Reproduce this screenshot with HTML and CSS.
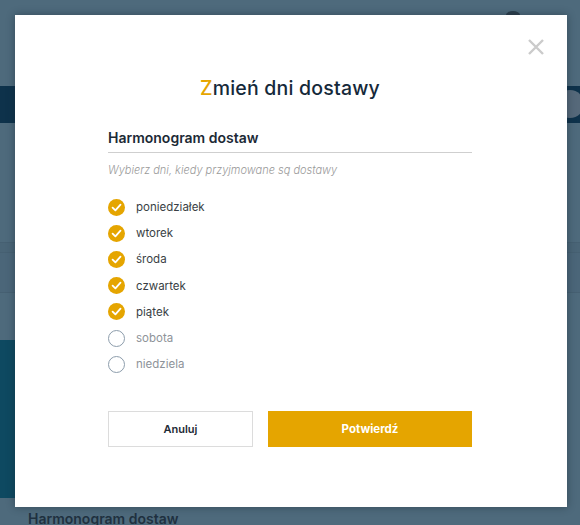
FILE: index.html
```html
<!DOCTYPE html>
<html lang="pl">
<head>
<meta charset="utf-8">
<title>Zmień dni dostawy</title>
<link rel="stylesheet" href="styles.css">
</head>
<body>
<div class="page">
  <div class="bg-header"><span class="bg-avatar"></span></div>
  <div class="bg-nav"><span class="bg-circle"></span></div>
  <div class="bg-content">
    <div class="bg-row r1"></div>
    <div class="bg-row r2"></div>
    <div class="bg-row r3"></div>
    <div class="bg-row r4"></div>
    <div class="bg-side"></div>
    <div class="bg-foot">
      <div class="bg-text">Harmonogram dostaw</div>
    </div>
  </div>

  <div class="modal" role="dialog">
    <button class="close" aria-label="Zamknij">
      <svg width="18" height="18" viewBox="0 0 18 18"><path d="M2 2 L16 16 M16 2 L2 16" stroke="#cbcbcb" stroke-width="2.4" fill="none"/></svg>
    </button>
    <div class="content">
      <h1 class="title"><span class="accent">Z</span>mień dni dostawy</h1>
      <h2 class="section">Harmonogram dostaw</h2>
      <p class="hint">Wybierz dni, kiedy przyjmowane są dostawy</p>
      <ul class="days">
        <li class="day checked"><span class="box"><svg width="17" height="17" viewBox="0 0 17 17"><circle cx="8.5" cy="8.5" r="8.5" fill="#e5a500"/><path d="M4.6 8.6 L7.4 11.4 L12.5 5.7" stroke="#fff" stroke-width="1.8" fill="none" stroke-linecap="round" stroke-linejoin="round"/></svg></span>poniedziałek</li>
        <li class="day checked"><span class="box"><svg width="17" height="17" viewBox="0 0 17 17"><circle cx="8.5" cy="8.5" r="8.5" fill="#e5a500"/><path d="M4.6 8.6 L7.4 11.4 L12.5 5.7" stroke="#fff" stroke-width="1.8" fill="none" stroke-linecap="round" stroke-linejoin="round"/></svg></span>wtorek</li>
        <li class="day checked"><span class="box"><svg width="17" height="17" viewBox="0 0 17 17"><circle cx="8.5" cy="8.5" r="8.5" fill="#e5a500"/><path d="M4.6 8.6 L7.4 11.4 L12.5 5.7" stroke="#fff" stroke-width="1.8" fill="none" stroke-linecap="round" stroke-linejoin="round"/></svg></span>środa</li>
        <li class="day checked"><span class="box"><svg width="17" height="17" viewBox="0 0 17 17"><circle cx="8.5" cy="8.5" r="8.5" fill="#e5a500"/><path d="M4.6 8.6 L7.4 11.4 L12.5 5.7" stroke="#fff" stroke-width="1.8" fill="none" stroke-linecap="round" stroke-linejoin="round"/></svg></span>czwartek</li>
        <li class="day checked"><span class="box"><svg width="17" height="17" viewBox="0 0 17 17"><circle cx="8.5" cy="8.5" r="8.5" fill="#e5a500"/><path d="M4.6 8.6 L7.4 11.4 L12.5 5.7" stroke="#fff" stroke-width="1.8" fill="none" stroke-linecap="round" stroke-linejoin="round"/></svg></span>piątek</li>
        <li class="day"><span class="box"><svg width="17" height="17" viewBox="0 0 17 17"><circle cx="8.5" cy="8.5" r="8" fill="#fff" stroke="#8c9cab" stroke-width="1"/></svg></span>sobota</li>
        <li class="day"><span class="box"><svg width="17" height="17" viewBox="0 0 17 17"><circle cx="8.5" cy="8.5" r="8" fill="#fff" stroke="#8c9cab" stroke-width="1"/></svg></span>niedziela</li>
      </ul>
      <div class="actions">
        <button class="btn btn-cancel">Anuluj</button>
        <button class="btn btn-confirm">Potwierdź</button>
      </div>
    </div>
  </div>
</div>
</body>
</html>
```

FILE: styles.css
```css
* { box-sizing: border-box; }
html, body { margin: 0; padding: 0; }
body {
  width: 580px;
  height: 525px;
  overflow: hidden;
  background: #4e6a7c;
  font-family: Inter, "Noto Sans", sans-serif;
}
.page {
  position: relative;
  width: 580px;
  height: 525px;
  display: flex;
  flex-direction: column;
}
.bg-header {
  height: 86px;
  flex: none;
  background: #4e6a7c;
  position: relative;
}
.bg-avatar {
  position: absolute;
  left: 506px;
  top: 11px;
  width: 14px;
  height: 8px;
  border-radius: 50%;
  background: #2c3e4c;
}
.bg-nav {
  height: 37px;
  flex: none;
  background: #0e324b;
  position: relative;
}
.bg-circle {
  position: absolute;
  left: 556px;
  top: 4px;
  width: 28px;
  height: 28px;
  border-radius: 50%;
  background: #56697a;
}
.bg-content {
  flex: 1;
  position: relative;
  background: #4e6a7c;
  display: flex;
  flex-direction: column;
  overflow: hidden;
}
.bg-row { flex: none; border-bottom: 1px solid #466072; }
.bg-row.r1 { height: 120px; }
.bg-row.r2 { height: 10px; background: #4a6577; }
.bg-row.r3 { height: 40px; background: #4b6679; }
.bg-row.r4 { height: 47px; border-bottom: 0; }
.bg-side {
  flex: none;
  width: 300px;
  height: 158px;
  background: #0e4961;
}
.bg-foot {
  flex: none;
  padding: 13px 0 0 28px;
}
.bg-text {
  color: #1f3140;
  font-size: 14px;
  line-height: 16px;
  font-weight: 600;
}
.modal {
  position: absolute;
  left: 15px;
  top: 15px;
  width: 552px;
  height: 492px;
  background: #fff;
  box-shadow: 0 0 8px rgba(20, 35, 45, 0.45);
}
.close {
  position: absolute;
  left: 512px;
  top: 23px;
  margin: 0;
  padding: 0;
  border: 0;
  background: none;
  width: 18px;
  height: 18px;
  cursor: pointer;
}
.close svg { display: block; }
.content {
  width: 364px;
  margin-left: 93px;
  padding-top: 61px;
}
.title {
  margin: 0;
  text-align: center;
  font-size: 19.5px;
  line-height: 24px;
  font-weight: 500;
  color: #15293a;
  letter-spacing: 0.2px;
}
.accent { color: #e5a500; }
.section {
  margin: 29px 0 0;
  padding-bottom: 5px;
  font-size: 14px;
  line-height: 18px;
  font-weight: 600;
  color: #1c2a36;
  border-bottom: 1px solid #cfcfcf;
}
.hint {
  margin: 10px 0 0;
  font-size: 11px;
  line-height: 14px;
  font-style: italic;
  font-weight: 300;
  color: #9a9a9a;
}
.days {
  list-style: none;
  margin: 17px 0 0;
  padding: 0;
}
.day {
  height: 26.2px;
  display: flex;
  align-items: center;
  gap: 11px;
  font-size: 11.5px;
  color: #3a3f45;
}
.day:not(.checked) { color: #8e9399; }
.box { display: flex; width: 17px; height: 17px; }
.box svg { display: block; }
.actions {
  display: flex;
  gap: 15px;
  margin-top: 34px;
}
.btn {
  height: 36px;
  font-family: inherit;
  font-size: 11px;
  cursor: pointer;
  margin: 0;
}
.btn-cancel {
  width: 145px;
  background: #fff;
  border: 1px solid #dcdcdc;
  color: #1e2a36;
  font-weight: 600;
}
.btn-confirm {
  width: 204px;
  background: #e5a500;
  border: 0;
  color: #fff;
  font-weight: 700;
  font-size: 11.5px;
}
```
